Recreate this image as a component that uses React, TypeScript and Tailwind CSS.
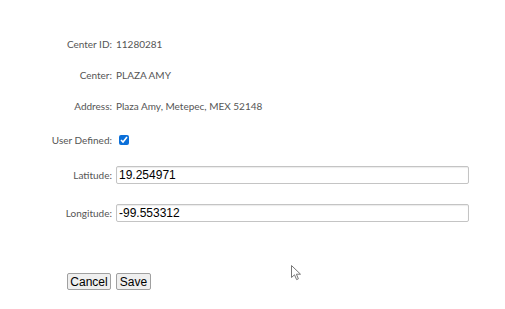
import React from "react";

const labelCls = "w-[116px] shrink-0 pr-[4px] text-right text-[10px] text-[#555555]";
const valueCls = "text-[10px] text-[#555555]";
const font = { fontFamily: 'Lato, "Open Sans", sans-serif' };
const inputCls =
  "w-[353px] h-[18px] border border-[#c4c4c4] rounded-[2px] px-[2px] text-[12px] text-black outline-none shadow-[inset_0_1px_1px_rgba(0,0,0,0.08)]";

export default function App() {
  return (
    <div className="relative w-[505px] h-[309px] bg-white" style={font}>
      <div className="flex flex-col pt-[29px]">
        <div className="flex items-center h-[30px]">
          <div className={labelCls}>Center ID:</div>
          <div className={valueCls}>11280281</div>
        </div>
        <div className="flex items-center h-[30px] mt-[1px]">
          <div className={labelCls}>Center:</div>
          <div className={valueCls}>PLAZA AMY</div>
        </div>
        <div className="flex items-center h-[30px] mt-[1px]">
          <div className={labelCls}>Address:</div>
          <div className={valueCls}>Plaza Amy, Metepec, MEX 52148</div>
        </div>
        <div className="flex items-center h-[30px] mt-[4px]">
          <div className={labelCls}>User Defined:</div>
          <input
            type="checkbox"
            defaultChecked
            className="m-0 ml-[3px] w-[10px] h-[10px] accent-[#0b6fd9]"
          />
        </div>
        <div className="flex items-center h-[30px] mt-[5px]">
          <div className={labelCls + " w-[115px]"}>Latitude:</div>
          <input
            type="text"
            defaultValue="19.254971"
            className={inputCls}
            style={{ fontFamily: '"Liberation Sans", Arial, sans-serif' }}
          />
        </div>
        <div className="flex items-center h-[30px] mt-[8px]">
          <div className={labelCls + " w-[115px]"}>Longitude:</div>
          <input
            type="text"
            defaultValue="-99.553312"
            className={inputCls}
            style={{ fontFamily: '"Liberation Sans", Arial, sans-serif' }}
          />
        </div>
        <div
          className="flex items-center gap-[5px] pl-[67px] mt-[45px]"
          style={{ fontFamily: '"Liberation Sans", Arial, sans-serif' }}
        >
          <button className="h-[17px] w-[44px] border border-[#a0a0a0] rounded-[2px] bg-[#efefef] text-[12px] leading-none text-black">
            Cancel
          </button>
          <button className="h-[17px] w-[35px] border border-[#a0a0a0] rounded-[2px] bg-[#efefef] text-[12px] leading-none text-black">
            Save
          </button>
        </div>
      </div>
      <svg
        className="absolute left-[291px] top-[265px]"
        width="11"
        height="16"
        viewBox="0 0 11 16"
      >
        <path
          d="M0.5 0.5 L0.5 12.5 L3.5 9.8 L5.6 14.6 L7.4 13.8 L5.4 9.2 L9.5 9.2 Z"
          fill="white"
          stroke="#777"
          strokeWidth="1"
          strokeLinejoin="round"
        />
      </svg>
    </div>
  );
}
